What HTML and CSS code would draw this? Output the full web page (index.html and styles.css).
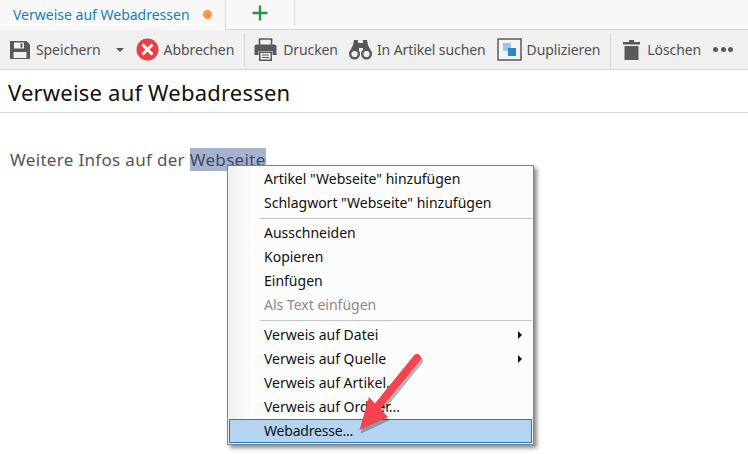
FILE: index.html
```html
<!DOCTYPE html>
<html lang="de">
<head>
<meta charset="utf-8">
<title>Verweise auf Webadressen</title>
<link rel="stylesheet" href="styles.css">
</head>
<body>
<div class="tabs">
  <div class="tab tab-active"><span class="tab-title">Verweise auf Webadressen</span><span class="dot"></span></div>
  <div class="tab tab-new">
    <svg width="18" height="18" viewBox="0 0 18 18"><path d="M9 1.500v15M1.500 9h15" stroke="#2e9440" stroke-width="2.400" fill="none"/></svg>
  </div>
</div>
<div class="toolbar">
  <div class="tool t-save">
    <svg width="20" height="20" viewBox="0 0 20 20"><path fill="#595959" d="M0 1h16.500L20 4.500V19H0z"/><path fill="#f0f0f0" d="M4 2.500h10v6H4zM3.500 12h13v6h-13z"/><path fill="#595959" d="M10.500 3.500h2v4h-2z"/></svg>
    <span>Speichern</span>
  </div>
  <svg class="caret" width="8" height="4" viewBox="0 0 8 4"><path fill="#555" d="M0 0h8L4 4z"/></svg>
  <div class="tool t-cancel">
    <svg width="23" height="23" viewBox="0 0 23 23"><circle cx="11.500" cy="11.500" r="11" fill="#ee3d43"/><path d="M6.500 6.500l10 10M16.500 6.500l-10 10" stroke="#fff" stroke-width="3" fill="none"/></svg>
    <span>Abbrechen</span>
  </div>
  <div class="sep"></div>
  <div class="tool t-print">
    <svg width="23" height="23" viewBox="0 0 23 23"><path fill="none" stroke="#595959" stroke-width="1.600" d="M5.500 7V1h12v6"/><path fill="#595959" d="M2.500 6.500h18a2 2 0 0 1 2 2V17h-4v-4H4.500v4H.5V8.500a2 2 0 0 1 2-2z"/><path fill="#595959" d="M5 13.500h13V23H5z"/><path fill="#f0f0f0" d="M6.500 15h10v6.500h-10z"/><path stroke="#595959" stroke-width="1" d="M8 17h7M8 19.500h7"/></svg>
    <span>Drucken</span>
  </div>
  <div class="tool t-find">
    <svg width="23" height="20" viewBox="0 0 23 20"><path fill="#595959" d="M5 0h4v3h5V0h4l1 5 4 8h-9V8h-4v5H0l4-8z"/><circle cx="5.500" cy="14" r="4.300" fill="#f0f0f0" stroke="#595959" stroke-width="2.400"/><circle cx="17.500" cy="14" r="4.300" fill="#f0f0f0" stroke="#595959" stroke-width="2.400"/></svg>
    <span>In Artikel suchen</span>
  </div>
  <div class="tool t-dup">
    <svg width="25" height="23" viewBox="0 0 25 23"><rect x="1" y="1" width="23" height="21" fill="#f4f4f4" stroke="#595959" stroke-width="1.500"/><path fill="#9cc6e6" d="M6 5h8v5h-3v3H6z"/><path fill="#2388cf" d="M11 10h8v8h-8z"/></svg>
    <span>Duplizieren</span>
  </div>
  <div class="sep"></div>
  <div class="tool t-del">
    <svg width="17" height="20" viewBox="0 0 17 20"><path fill="#595959" d="M6 0h5v2h6v2.500H0V2h6zM1.500 6h14v14h-14z"/></svg>
    <span>Löschen</span>
  </div>
  <div class="more"><i></i><i></i><i></i></div>
</div>
<h1 class="title">Verweise auf Webadressen</h1>
<main class="editor">
  <p class="para">Weitere Infos auf der <span class="selected">Webseite</span></p>
</main>
<div class="menu">
  <div class="item">Artikel "Webseite" hinzufügen</div>
  <div class="item">Schlagwort "Webseite" hinzufügen</div>
  <div class="rule"></div>
  <div class="item">Ausschneiden</div>
  <div class="item">Kopieren</div>
  <div class="item">Einfügen</div>
  <div class="item disabled">Als Text einfügen</div>
  <div class="rule"></div>
  <div class="item sub">Verweis auf Datei</div>
  <div class="item sub">Verweis auf Quelle</div>
  <div class="item">Verweis auf Artikel...</div>
  <div class="item">Verweis auf Ordner...</div>
  <div class="item active">Webadresse...</div>
</div>
<svg class="arrow" width="748" height="454" viewBox="0 0 748 454">
  <g transform="translate(2 3)" fill="#000" stroke="#000" opacity=".28"><path d="M417 358L378 406" stroke-width="8" stroke-linecap="round"/><path d="M359 430L370 398L387 417z" stroke-width="1"/></g>
  <path d="M417 358L378 406" stroke="#f44450" stroke-width="8" stroke-linecap="round" fill="none"/>
  <path d="M359.500 430L369 397L388 417z" fill="#f44450"/>
</svg>
</body>
</html>
```
FILE: styles.css
```css
* { box-sizing: border-box; }
html, body { margin: 0; padding: 0; }
body {
  width: 748px;
  height: 454px;
  overflow: hidden;
  background: #fff;
  font-family: "Noto Sans", "Open Sans", sans-serif;
  color: #505050;
  position: relative;
}
.tabs {
  display: flex;
  height: 30px;
  background: #f8f8f8;
  border-bottom: 1px solid #d8d8d8;
}
.tab-active {
  width: 226px;
  display: flex;
  align-items: center;
  padding: 0 13px 1px 13px;
  justify-content: space-between;
  border-right: 1px solid #d8d8d8;
  margin-bottom: -1px;
  background: #f8f8f8;
}
.tab-title { font-size: 14px; color: #1480b8; }
.dot { width: 9px; height: 9px; border-radius: 50%; background: #fb9a3c; }
.tab-new {
  width: 69px;
  height: 25px;
  display: flex;
  align-items: center;
  justify-content: center;
  border-right: 1px solid #d8d8d8;
}
.toolbar {
  display: flex;
  align-items: center;
  height: 40px;
  background: #f0f0f0;
  border-bottom: 1px solid #d8d8d8;
  font-size: 14px;
  letter-spacing: -.1px;
  padding-left: 10px;
}
.tool { display: flex; align-items: center; flex: none; }
.t-save { gap: 6px; }
.caret { margin-left: 15px; flex: none; }
.t-cancel { margin-left: 12px; gap: 5px; }
.sep { width: 1px; height: 34px; background: #d8d8d8; flex: none; margin-left: 10px; }
.t-print { margin-left: 9px; gap: 6px; }
.t-find { margin-left: 11px; gap: 5px; }
.t-dup { margin-left: 11px; gap: 5px; }
.t-del { margin-left: 12px; gap: 7px; }
.more { display: flex; gap: 2.500px; margin-left: 12px; }
.more i { width: 5px; height: 5px; border-radius: 50%; background: #595959; }
.title {
  margin: 0;
  height: 43px;
  border-bottom: 1px solid #d8d8d8;
  padding: 6px 0 0 8px;
  font-size: 22px;
  line-height: 33px;
  font-weight: 400;
  color: #111;
  letter-spacing: .2px;
}
.editor { padding: 35px 0 0 10px; }
.para { margin: 0; font-size: 17px; line-height: 24px; color: #555; letter-spacing: .32px; }
.selected { background: #a6b2cf; color: #3f4a60; }
.menu {
  position: absolute;
  left: 227px;
  top: 165px;
  width: 307px;
  height: 280px;
  padding: 1px;
  border: 1px solid #808080;
  background: linear-gradient(90deg, #f0f0f0, #fcfcfc 24px);
  box-shadow: 3px 3px 4px rgba(0, 0, 0, .45);
  font-size: 14px;
  color: #111;
}
.item {
  height: 24px;
  line-height: 24px;
  padding-left: 35px;
  position: relative;
}
.disabled { color: #8a8a8a; }
.sub::after {
  content: "";
  position: absolute;
  right: 10px;
  top: 8px;
  border-left: 4px solid #111;
  border-top: 4px solid transparent;
  border-bottom: 4px solid transparent;
}
.rule { height: 1px; margin: 3px 0 2px 31px; background: #c4c4c4; }
.active {
  background: #b3d5f2;
  outline: 1px solid #1c79bd;
  outline-offset: -1px;
  line-height: 23px;
  letter-spacing: -.2px;
}
.arrow { position: absolute; left: 0; top: 0; pointer-events: none; }
```
